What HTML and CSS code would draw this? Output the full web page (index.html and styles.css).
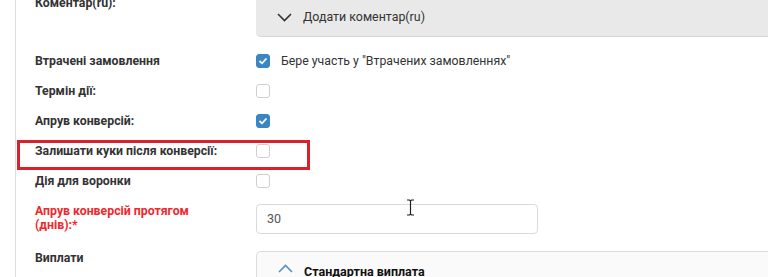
FILE: index.html
```html
<!DOCTYPE html>
<html lang="uk">
<head>
<meta charset="utf-8">
<title>Форма</title>
<link rel="stylesheet" href="styles.css">
</head>
<body>
<div class="form">
  <div class="row row-comment">
    <div class="label label-top">Коментар(ru):</div>
    <div class="panel panel-collapsed">
      <svg class="chev" width="15" height="9" viewBox="0 0 15 9"><path d="M1 1 L7.5 7.5 L14 1" fill="none" stroke="#333" stroke-width="1.6"/></svg>
      <span class="panel-title">Додати коментар(ru)</span>
    </div>
  </div>

  <div class="row row-check first">
    <div class="label">Втрачені замовлення</div>
    <div class="value">
      <span class="cb checked"><svg width="10" height="8" viewBox="0 0 10 8"><path d="M1.5 4 L4 6.3 L8.5 1.5" fill="none" stroke="#fff" stroke-width="1.8"/></svg></span>
      <span class="cb-text">Бере участь у "Втрачених замовленнях"</span>
    </div>
  </div>

  <div class="row row-check">
    <div class="label">Термін дії:</div>
    <div class="value"><span class="cb"></span></div>
  </div>

  <div class="row row-check">
    <div class="label">Апрув конверсій:</div>
    <div class="value">
      <span class="cb checked"><svg width="10" height="8" viewBox="0 0 10 8"><path d="M1.5 4 L4 6.3 L8.5 1.5" fill="none" stroke="#fff" stroke-width="1.8"/></svg></span>
    </div>
  </div>

  <div class="row row-check highlighted">
    <div class="label">Залишати куки після конверсії:</div>
    <div class="value"><span class="cb"></span></div>
    <span class="highlight"></span>
  </div>

  <div class="row row-check">
    <div class="label">Дія для воронки</div>
    <div class="value"><span class="cb"></span></div>
  </div>

  <div class="row row-input">
    <div class="label label-top required">Апрув конверсій протягом (днів):*</div>
    <div class="value-input">
      <div class="input">30</div>
    </div>
  </div>

  <div class="row row-payout">
    <div class="label label-top">Виплати</div>
    <div class="panel panel-open">
      <svg class="chev" width="15" height="9" viewBox="0 0 15 9"><path d="M1 8 L7.5 1.5 L14 8" fill="none" stroke="#5b8ec4" stroke-width="1.6"/></svg>
      <span class="panel-title bold">Стандартна виплата</span>
    </div>
  </div>
</div>

<svg class="ibeam" width="9" height="17" viewBox="0 0 9 17"><path d="M1 1 H3.5 L4.5 2 L5.5 1 H8 M4.5 2 V15 M1 16 H3.5 L4.5 15 L5.5 16 H8" fill="none" stroke="#222" stroke-width="1.2"/></svg>
</body>
</html>
```

FILE: styles.css
```css
html, body {
  margin: 0;
  padding: 0;
  background: #fff;
  overflow: hidden;
}

body {
  width: 768px;
  height: 277px;
  font-family: Roboto, "Noto Sans", "Liberation Sans", sans-serif;
  color: #333;
  position: relative;
}

.form {
  margin-left: 15px;
  margin-top: -12px;
  border-left: 1px solid #dcdcdc;
  padding-left: 19px;
  padding-bottom: 20px;
  display: flex;
  flex-direction: column;
}

.row {
  display: grid;
  grid-template-columns: 192px 1fr;
  column-gap: 29px;
  position: relative;
  flex-shrink: 0;
}

.label {
  font-size: 12.3px;
  font-weight: 700;
  line-height: 14px;
  color: #333;
  align-self: center;
  min-width: 0;
  width: 192px;
}

.label-top {
  align-self: start;
}

.row-comment .label {
  padding-top: 8px;
}

.panel {
  display: flex;
  align-items: center;
  gap: 11px;
  padding-left: 21px;
  margin-right: -10px;
}

.panel-collapsed {
  padding-top: 10px;
  box-sizing: border-box;
  height: 49px;
  background: #e9e9e9;
  border-bottom: 1px solid #d6d6d6;
  border-bottom-left-radius: 5px;
}

.panel-title {
  font-size: 12.4px;
  line-height: 16px;
  color: #333;
}

.panel-title.bold {
  font-size: 12.5px;
  font-weight: 700;
  color: #111;
}

.chev {
  display: block;
  flex: none;
}

.row-check {
  height: 30px;
  align-items: center;
}

.row-check.first {
  margin-top: 9px;
}

.value {
  display: flex;
  align-items: center;
  gap: 11px;
}

.cb {
  width: 14px;
  height: 14px;
  box-sizing: border-box;
  border: 1px solid #cfcfcf;
  border-radius: 3px;
  background: #fff;
  display: flex;
  align-items: center;
  justify-content: center;
}

.cb.checked {
  background: #3a86c3;
  border-color: #3a86c3;
}

.cb.checked svg {
  display: block;
}

.cb-text {
  font-size: 12.3px;
  line-height: 16px;
  color: #333;
}

.highlight {
  position: absolute;
  left: -18px;
  top: 4px;
  width: 293px;
  height: 30px;
  box-sizing: border-box;
  border: 3px solid #d9202b;
}

.row-input {
  margin-top: 8px;
}

.required {
  color: #f2272d;
}

.value-input {
  display: flex;
}

.input {
  width: 282px;
  height: 30px;
  box-sizing: border-box;
  border: 1px solid #dadada;
  border-radius: 4px;
  padding-left: 10px;
  font-size: 12.5px;
  line-height: 28px;
  color: #555;
  background: #fff;
}

.row-payout {
  margin-top: 17px;
}

.panel-open {
  height: 60px;
  box-sizing: border-box;
  align-items: flex-start;
  padding-top: 12px;
  background: #fafafa;
  border-top: 1px solid #dcdcdc;
  border-left: 1px solid #dcdcdc;
  border-top-left-radius: 5px;
}

.ibeam {
  position: absolute;
  left: 406px;
  top: 199px;
}
```
